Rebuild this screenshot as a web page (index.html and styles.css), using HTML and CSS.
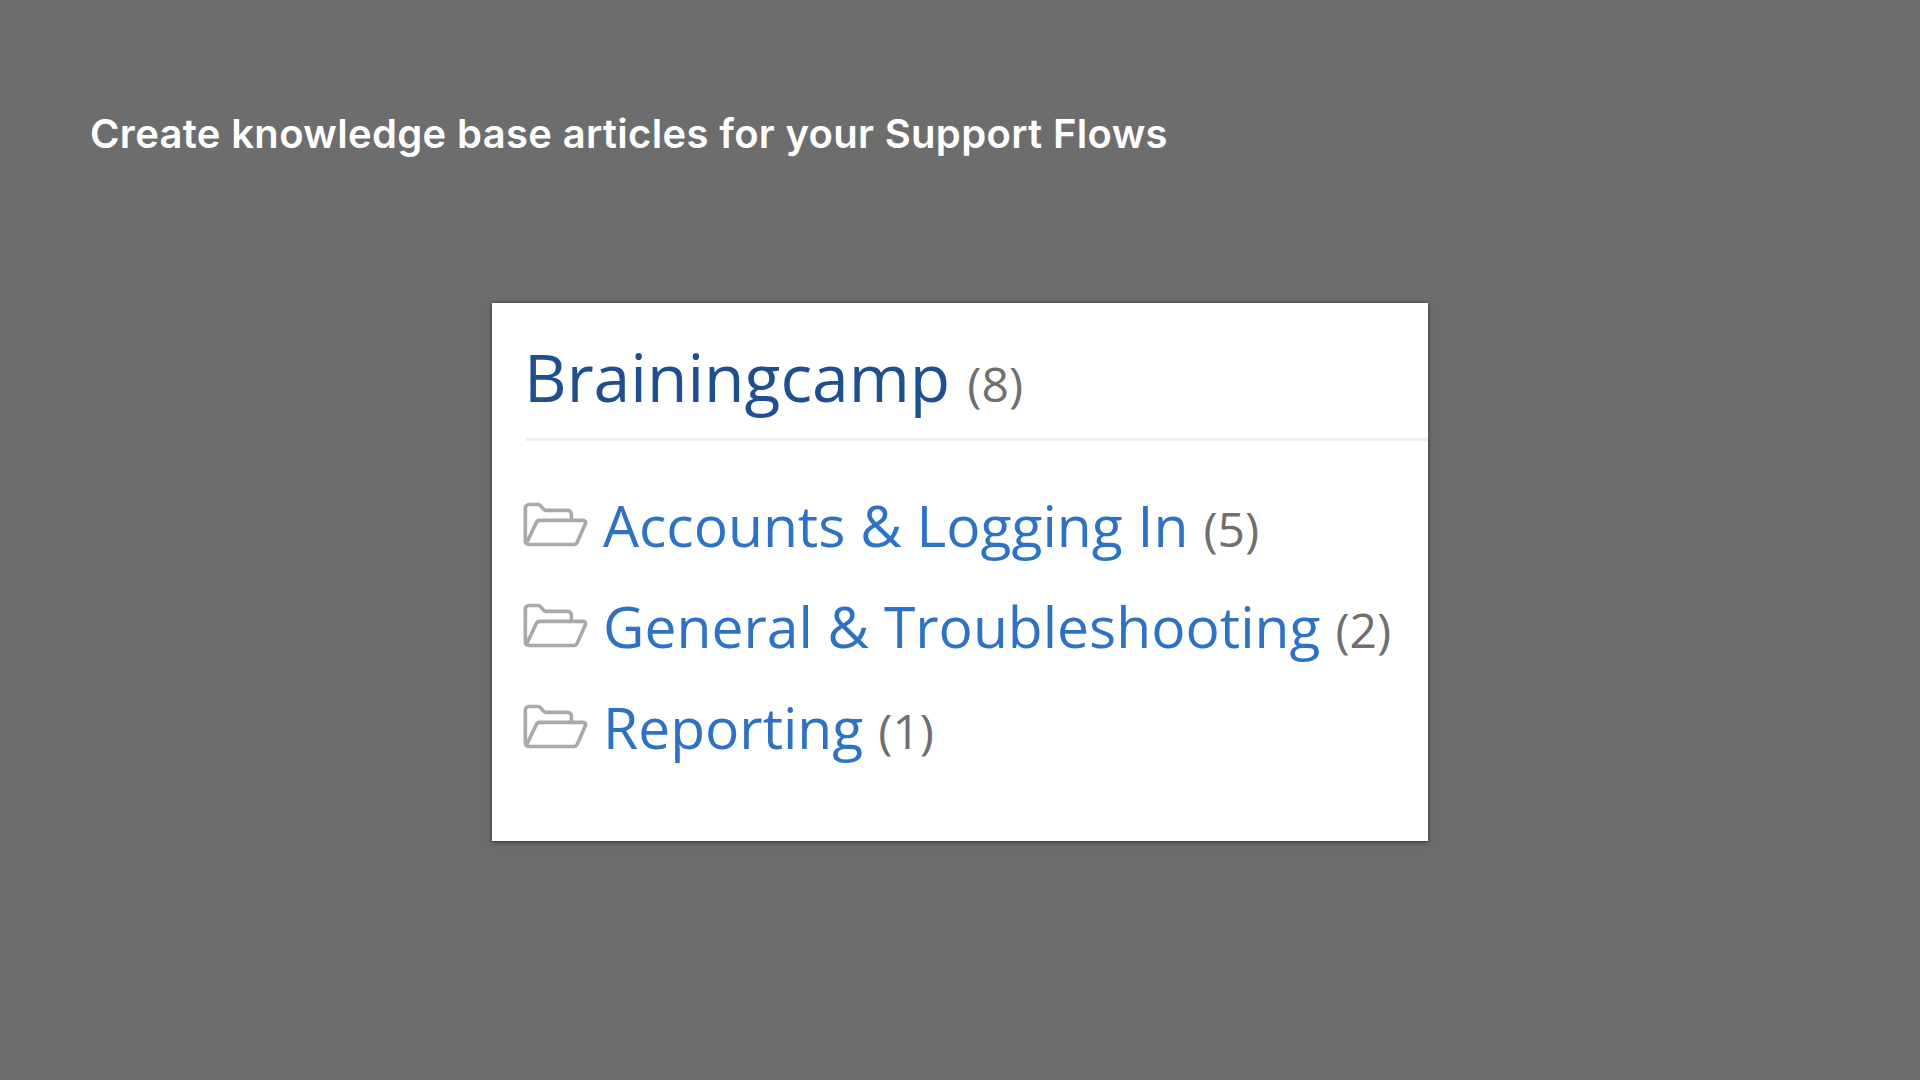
FILE: index.html
```html
<!DOCTYPE html>
<html lang="en">
<head>
  <meta charset="UTF-8" />
  <title>Support Flows</title>
  <link rel="stylesheet" href="styles.css">
</head>
<body>
  <h1 class="slide-title">Create knowledge base articles for your Support Flows</h1>

  <div class="kb-card">
    <h2 class="kb-header"><span class="kb-name">Brainingcamp</span> <span class="count">(8)</span></h2>
    <ul class="kb-list">
      <li class="kb-item">
        <svg class="folder" viewBox="0 0 64 44"><path d="M3 39V6a3.500 3.500 0 0 1 3.500-3.500h9a3 3 0 0 1 2.300 1l3.200 3.700a3 3 0 0 0 2.300 1h21.200a3.500 3.500 0 0 1 3.500 3.500V17M4 40.500l9.500-20a4 4 0 0 1 3.500-2.500h42.500c2 0 3 1.500 2.200 3.300l-8 18a4 4 0 0 1-3.500 2.200H6a3 3 0 0 1-3-3"/></svg>
        <a class="kb-link">Accounts &amp; Logging In</a> <span class="count">(5)</span>
      </li>
      <li class="kb-item">
        <svg class="folder" viewBox="0 0 64 44"><path d="M3 39V6a3.500 3.500 0 0 1 3.500-3.500h9a3 3 0 0 1 2.300 1l3.200 3.700a3 3 0 0 0 2.300 1h21.200a3.500 3.500 0 0 1 3.500 3.500V17M4 40.500l9.500-20a4 4 0 0 1 3.500-2.500h42.500c2 0 3 1.500 2.200 3.300l-8 18a4 4 0 0 1-3.500 2.200H6a3 3 0 0 1-3-3"/></svg>
        <a class="kb-link">General &amp; Troubleshooting</a> <span class="count">(2)</span>
      </li>
      <li class="kb-item">
        <svg class="folder" viewBox="0 0 64 44"><path d="M3 39V6a3.500 3.500 0 0 1 3.500-3.500h9a3 3 0 0 1 2.300 1l3.200 3.700a3 3 0 0 0 2.300 1h21.200a3.500 3.500 0 0 1 3.500 3.500V17M4 40.500l9.500-20a4 4 0 0 1 3.500-2.500h42.500c2 0 3 1.500 2.200 3.300l-8 18a4 4 0 0 1-3.500 2.200H6a3 3 0 0 1-3-3"/></svg>
        <a class="kb-link">Reporting</a> <span class="count">(1)</span>
      </li>
    </ul>
  </div>
</body>
</html>
```

FILE: styles.css
```css
* {
  box-sizing: border-box;
}

html, body {
  height: 100%;
}

body {
  margin: 0;
  background-color: #6d6d6d;
  padding: 109px 0 0 90px;
  overflow: hidden;
}

.slide-title {
  margin: 0;
  font-family: "Inter", sans-serif;
  font-size: 40px;
  font-weight: 600;
  letter-spacing: 0.33px;
  line-height: 50px;
  color: #fff;
}

.kb-card {
  width: 936px;
  height: 538px;
  margin: 144px 0 0 402px;
  padding: 0 0 0 34px;
  background-color: #fff;
  box-shadow: 0 2px 5px rgba(0, 0, 0, 0.3), 0 0 3px rgba(0, 0, 0, 0.4);
  font-family: "Open Sans", sans-serif;
}

.kb-header {
  height: 138px;
  margin: 0;
  padding-top: 28px;
  border-bottom: 3px solid #eee;
  font-size: 66px;
  font-weight: 400;
  line-height: 90px;
  white-space: nowrap;
  color: #1f4f8f;
}

.kb-name {
  margin-left: -2px;
}

.kb-header .count {
  margin-left: 0;
}

.kb-list {
  list-style: none;
  margin: 0;
  padding: 34px 0 0;
}

.kb-item {
  display: flex;
  align-items: baseline;
  height: 101px;
  font-size: 57px;
  line-height: 101px;
  white-space: nowrap;
}

.folder {
  flex: none;
  width: 66px;
  height: 45px;
  margin: 0 15px -1px -4px;
  fill: none;
  stroke: #a9a9a9;
  stroke-width: 3.5px;
}

.kb-link {
  color: #2f72c4;
}

.count {
  color: #6f6f6f;
  font-size: 48px;
  margin-left: 15px;
}
```
